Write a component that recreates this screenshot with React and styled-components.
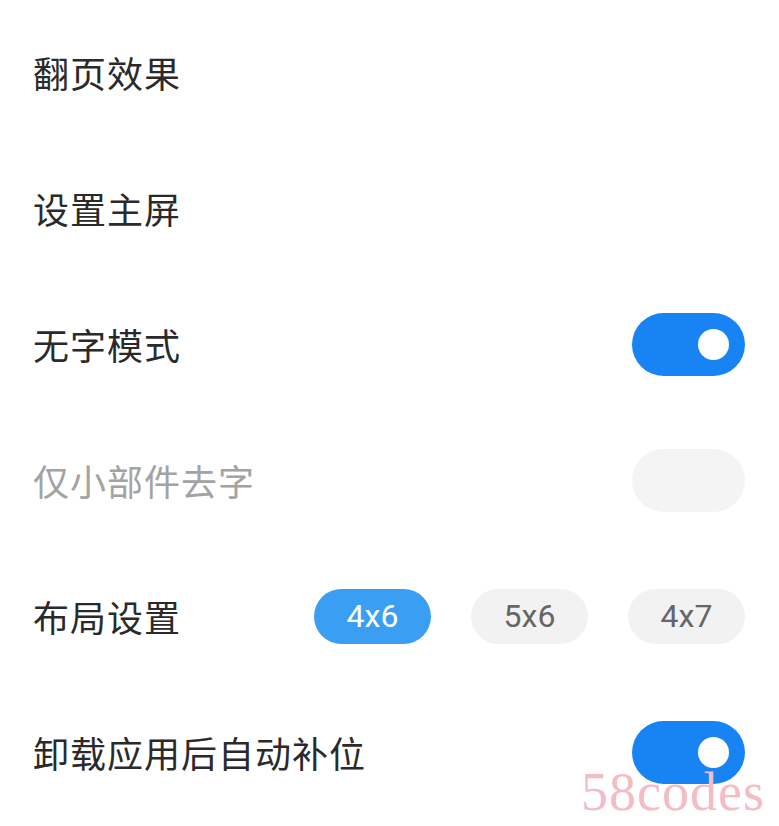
import styled, { createGlobalStyle } from "styled-components";

const GlobalStyle = createGlobalStyle`
  body {
    margin: 0;
    background: #ffffff;
    font-family: "Noto Sans CJK SC", "Noto Sans", sans-serif;
  }
`;

const Page = styled.div`
  position: relative;
  width: 779px;
  height: 826px;
  padding: 4px 34px 0 33px;
  box-sizing: border-box;
  overflow: hidden;
`;

const Row = styled.div`
  display: flex;
  align-items: center;
  justify-content: space-between;
  height: 136px;
`;

const Label = styled.span`
  font-size: 36px;
  line-height: 1;
  letter-spacing: 1px;
  color: ${(props) => (props.disabled ? "#a3a3a3" : "#2a2a2a")};
`;

const Toggle = styled.div`
  display: flex;
  align-items: center;
  justify-content: flex-end;
  width: 113px;
  height: 63px;
  padding-right: 16px;
  box-sizing: border-box;
  border-radius: 32px;
  background: ${(props) => (props.disabled ? "#f4f4f4" : "#1883f3")};
`;

const Knob = styled.div`
  width: 31px;
  height: 31px;
  border-radius: 50%;
  background: ${(props) => (props.disabled ? "#f4f4f4" : "#ffffff")};
`;

const Chips = styled.div`
  display: flex;
  gap: 40px;
`;

const Chip = styled.div`
  display: flex;
  align-items: center;
  justify-content: center;
  width: 117px;
  height: 55px;
  border-radius: 28px;
  font-family: "Roboto", "Noto Sans", sans-serif;
  font-size: 32px;
  background: ${(props) => (props.active ? "#3a9ef2" : "#f2f2f2")};
  color: ${(props) => (props.active ? "#ffffff" : "#666666")};
`;

const Watermark = styled.div`
  position: absolute;
  right: 14px;
  bottom: 7px;
  font-family: "Liberation Serif", serif;
  font-size: 54px;
  line-height: 1;
  letter-spacing: 1px;
  color: #f4bcc3;
`;

function Switch({ disabled }) {
  return (
    <Toggle disabled={disabled}>
      <Knob disabled={disabled} />
    </Toggle>
  );
}

const LAYOUTS = ["4x6", "5x6", "4x7"];

export default function App() {
  return (
    <Page>
      <GlobalStyle />
      <Row>
        <Label>翻页效果</Label>
      </Row>
      <Row>
        <Label>设置主屏</Label>
      </Row>
      <Row>
        <Label>无字模式</Label>
        <Switch />
      </Row>
      <Row>
        <Label disabled>仅小部件去字</Label>
        <Switch disabled />
      </Row>
      <Row>
        <Label>布局设置</Label>
        <Chips>
          {LAYOUTS.map((layout, index) => (
            <Chip key={layout} active={index === 0}>
              {layout}
            </Chip>
          ))}
        </Chips>
      </Row>
      <Row>
        <Label>卸载应用后自动补位</Label>
        <Switch />
      </Row>
      <Watermark>58codes</Watermark>
    </Page>
  );
}
